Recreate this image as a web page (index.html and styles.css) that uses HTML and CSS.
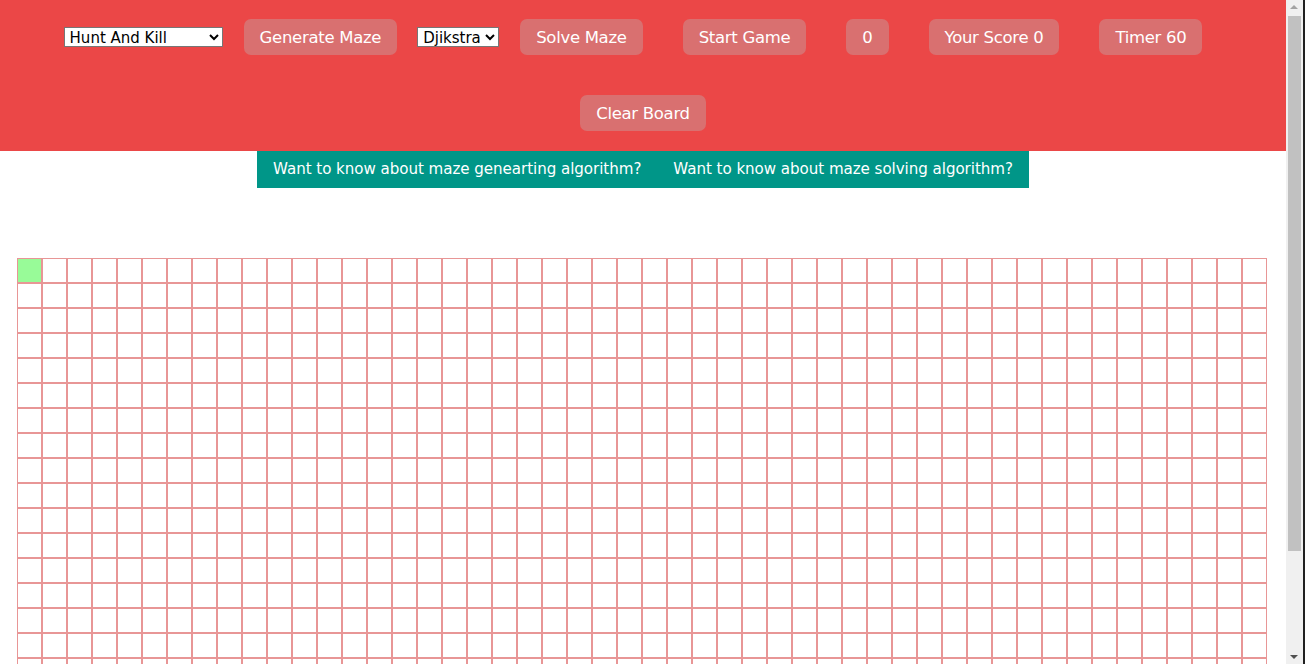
FILE: index.html
```html
<!DOCTYPE html>
<html>
<head>
<meta charset="utf-8">
<title>Maze</title>
<link rel="stylesheet" href="styles.css">
</head>
<body>
<div class="page">
  <header class="header">
    <div class="controls">
      <select class="select select-gen"><option>Hunt And Kill</option></select>
      <button class="btn">Generate Maze</button>
      <select class="select select-solve"><option>Djikstra</option></select>
      <button class="btn">Solve Maze</button>
      <button class="btn">Start Game</button>
      <button class="btn">0</button>
      <button class="btn">Your Score 0</button>
      <button class="btn">Timer 60</button>
      <button class="btn">Clear Board</button>
    </div>
  </header>
  <nav class="info">
    <a class="info-link">Want to know about maze genearting algorithm?</a>
    <a class="info-link">Want to know about maze solving algorithm?</a>
  </nav>
  <main class="board" id="board"></main>
</div>
<div class="scrollbar">
  <div class="arrow arrow-up"></div>
  <div class="thumb"></div>
  <div class="arrow arrow-down"></div>
</div>
<div class="window-edge"></div>
<script>
  var b = document.getElementById('board');
  for (var i = 0; i < 50 * 20; i++) {
    var c = document.createElement('div');
    c.className = i === 0 ? 'cell start' : 'cell';
    b.appendChild(c);
  }
</script>
</body>
</html>
```

FILE: styles.css
```css
html, body {
  margin: 0;
  padding: 0;
  background: #ffffff;
  font-family: "DejaVu Sans", Verdana, sans-serif;
  overflow-x: hidden;
}

.page {
  width: 1286px;
}

.header {
  background: #eb4747;
  height: 151px;
  box-sizing: border-box;
}

.controls {
  display: flex;
  flex-wrap: wrap;
  justify-content: center;
  align-items: center;
  padding: 19px 0 20px 0;
  row-gap: 40px;
}

.btn {
  margin: 0 20px;
  height: 36px;
  padding: 0 16px;
  border: none;
  border-radius: 7px;
  background: #d97070;
  color: #ffffff;
  font-family: "DejaVu Sans", Verdana, sans-serif;
  font-size: 16.5px;
  letter-spacing: -0.3px;
}

.btn-wide {
  padding: 0 18px;
}

.select {
  height: 20px;
  font-family: "DejaVu Sans", Verdana, sans-serif;
  font-size: 15px;
  color: #000;
  background: #fff;
  border: 1px solid #767676;
  padding: 0 1px;
}

.select-gen { width: 159px; margin-right: 1px; }
.select-solve { width: 82px; margin-right: 1px; }

.info {
  display: flex;
  justify-content: center;
}

.info-link {
  background: #009688;
  color: #ffffff;
  padding: 0 16px;
  height: 37px;
  line-height: 37px;
  font-size: 15.1px;
  letter-spacing: -0.05px;
}

.board {
  display: grid;
  grid-template-columns: repeat(50, 25px);
  grid-auto-rows: 25px;
  margin: 70px 0 24px 17px;
  width: 1250px;
}

.cell {
  border: 1px solid #e89696;
  background: #ffffff;
}

.cell.start {
  background: #98fb98;
}

/* faux browser scrollbar overlay */
.scrollbar {
  position: fixed;
  top: 0;
  right: 2px;
  width: 17px;
  height: 664px;
  background: #f0f0f0;
}

.thumb {
  position: absolute;
  left: 2px;
  top: 16px;
  width: 13px;
  height: 535px;
  background: #c1c1c1;
}

.arrow {
  position: absolute;
  left: 4px;
  width: 0;
  height: 0;
  border-left: 4px solid transparent;
  border-right: 4px solid transparent;
}

.arrow-up {
  top: 5px;
  border-bottom: 4px solid #a3a3a3;
}

.arrow-down {
  bottom: 5px;
  border-top: 4px solid #505050;
}

.window-edge {
  position: fixed;
  top: 0;
  right: 0;
  width: 2px;
  height: 664px;
  background: #202020;
}
```
